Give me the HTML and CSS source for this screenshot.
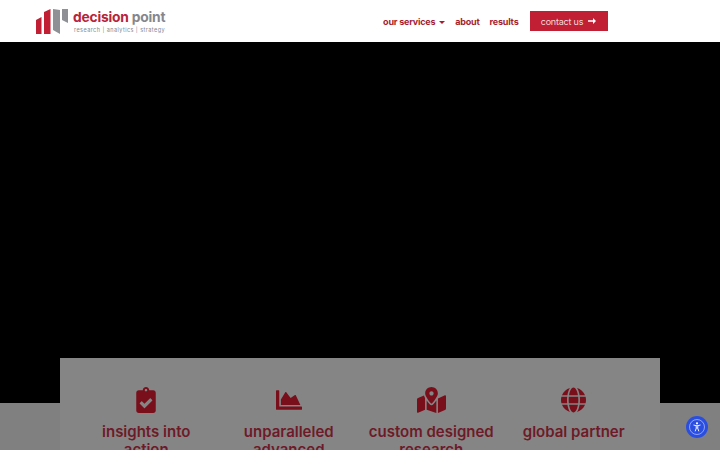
FILE: index.html
```html
<!DOCTYPE html>
<html lang="en">
<head>
  <meta charset="UTF-8" />
  <meta name="viewport" content="width=device-width, initial-scale=1.0"/>
  <title>Decision Point</title>
  <link rel="stylesheet" href="styles.css">
</head>
<body>
  <header class="site-header">
    <a class="logo">
      <svg class="logo-mark" width="33" height="26" viewBox="0 0 33 26">
        <polygon points="0,11 5.500,8 5.500,25 0,25" fill="#c11f33"/>
        <polygon points="8,3 14.500,0 14.500,25 8,25" fill="#c11f33"/>
        <polygon points="17,0 24,1 24,25 17,21" fill="#8e9096"/>
        <polygon points="26,0 32,0 32,14 26,11" fill="#8e9096"/>
      </svg>
      <div class="logo-text">
        <div class="logo-name"><span class="red">decision</span> <span class="grey">point</span></div>
        <div class="logo-sub">research | analytics | strategy</div>
      </div>
    </a>
    <nav class="main-nav">
      <a class="has-caret">our services <span class="caret"></span></a>
      <a>about</a>
      <a>results</a>
      <a class="contact-btn">contact us
        <svg width="8" height="6" viewBox="0 0 8 6"><path d="M0 2.200h5V0l3 3-3 3V3.800H0z" fill="#fff"/></svg>
      </a>
    </nav>
  </header>

  <section class="hero"></section>

  <section class="lower">
    <div class="panel">
      <div class="feature">
        <svg class="icon" width="20" height="26" viewBox="0 0 384 512"><path fill="#7a0f1c" d="M336 64h-80c0-35.300-28.700-64-64-64s-64 28.700-64 64H48C21.500 64 0 85.500 0 112v352c0 26.500 21.500 48 48 48h288c26.500 0 48-21.500 48-48V112c0-26.500-21.500-48-48-48zM192 40c13.300 0 24 10.700 24 24s-10.700 24-24 24-24-10.700-24-24 10.700-24 24-24zm121.200 231.800l-143 141.800c-4.700 4.700-12.300 4.600-17-.1l-82.600-83.300c-4.700-4.700-4.600-12.300.1-17L99.100 285c4.700-4.700 12.300-4.600 17 .1l46 46.400 106-105.200c4.700-4.700 12.300-4.600 17 .1l28.200 28.400c4.700 4.800 4.600 12.300-.1 17z"/></svg>
        <h3>insights into action</h3>
      </div>
      <div class="feature">
        <svg class="icon" width="26" height="26" viewBox="0 0 512 512"><path fill="#7a0f1c" d="M500 384c6.600 0 12 5.400 12 12v40c0 6.600-5.400 12-12 12H12c-6.600 0-12-5.400-12-12V76c0-6.600 5.400-12 12-12h40c6.600 0 12 5.400 12 12v308h436zM372.700 159.500L288 216l-85.300-113.700c-5.100-6.800-15.500-6.300-19.900 1L96 248v104h384l-89.900-187.800c-3.200-6.500-11.400-8.700-17.400-4.700z"/></svg>
        <h3>unparalleled advanced analytics</h3>
      </div>
      <div class="feature">
        <svg class="icon" width="29" height="26" viewBox="0 0 576 512"><path fill="#7a0f1c" d="M288 0c-69.590 0-126 56.410-126 126 0 56.260 82.350 158.800 113.900 196.020 6.390 7.540 17.820 7.540 24.200 0C331.650 284.800 414 182.260 414 126 414 56.410 357.590 0 288 0zm0 168c-23.200 0-42-18.800-42-42s18.800-42 42-42 42 18.800 42 42-18.800 42-42 42zM20.120 215.950A32.006 32.006 0 0 0 0 245.660v250.320c0 11.320 11.430 19.060 21.940 14.860L160 448V214.920c-8.840-15.980-16.070-31.540-21.250-46.420L20.120 215.950zM288 359.670c-14.070 0-27.380-6.180-36.510-16.960-19.660-23.200-40.570-49.620-59.490-76.720v182l192 64V266c-18.920 27.090-39.820 53.520-59.490 76.720-9.130 10.770-22.440 16.950-36.510 16.950zm266.060-198.510L416 224v288l139.880-55.950A31.996 31.996 0 0 0 576 426.340V176.020c0-11.320-11.430-19.060-21.940-14.860z"/></svg>
        <h3>custom designed research</h3>
      </div>
      <div class="feature">
        <svg class="icon" width="25" height="26" viewBox="0 0 496 512"><path fill="#7a0f1c" d="M336.500 160C322 70.700 287.800 8 248 8s-74 62.700-88.500 152h177zM152 256c0 22.200 1.200 43.500 3.300 64h185.300c2.100-20.500 3.300-41.800 3.300-64s-1.200-43.500-3.300-64H155.300c-2.100 20.500-3.300 41.800-3.300 64zm324.700-96c-28.600-67.900-86.500-120.400-158-141.600 24.400 33.800 41.200 84.700 50 141.600h108zM177.200 18.400C105.800 39.600 47.800 92.100 19.300 160h108c8.700-56.900 25.500-107.800 49.900-141.600zM487.400 192H372.700c2.100 21 3.300 42.500 3.300 64s-1.200 43-3.300 64h114.600c5.500-20.500 8.600-41.800 8.600-64s-3.100-43.500-8.500-64zM120 256c0-21.500 1.200-43 3.300-64H8.600C3.200 212.500 0 233.800 0 256s3.200 43.500 8.600 64h114.600c-2-21-3.200-42.500-3.200-64zm39.500 96c14.500 89.300 48.700 152 88.500 152s74-62.700 88.500-152h-177zm159.300 141.600c71.400-21.200 129.400-73.700 158-141.600h-108c-8.800 56.900-25.600 107.800-50 141.600zM19.300 352c28.600 67.900 86.500 120.400 158 141.600-24.400-33.800-41.200-84.700-50-141.600h-108z"/></svg>
        <h3>global partner</h3>
      </div>
    </div>
  </section>

  <button class="a11y-btn" aria-label="Accessibility">
    <svg width="22" height="22" viewBox="0 0 22 22">
      <circle cx="11" cy="11" r="7.500" fill="none" stroke="#a9b8ff" stroke-width=".8"/>
      <circle cx="11" cy="7.300" r="1.100" fill="#fff"/>
      <path d="M7.500 9l2.600.7h1.800l2.600-.7M10.200 9.700v2.600l-1 3M11.800 9.700v2.600l1 3M10.200 12h1.600" fill="none" stroke="#fff" stroke-width=".9"/>
    </svg>
  </button>
</body>
</html>
```

FILE: styles.css
```css
html, body {
  height: 100%;
  overflow: hidden;
}

body {
  margin: 0;
  font-family: "Inter", "Liberation Sans", sans-serif;
  background: #808080;
}

.site-header {
  height: 42px;
  box-sizing: border-box;
  background: #fff;
  display: flex;
  align-items: center;
  justify-content: space-between;
  padding: 0 112.500px 0 36px;
}

.logo {
  display: flex;
  align-items: center;
  gap: 4px;
}

.logo-mark {
  margin-top: 1px;
}

.logo-name {
  font-size: 13.800px;
  font-weight: 700;
  letter-spacing: -0.2px;
  line-height: 16px;
  white-space: nowrap;
}

.logo-name .red {
  color: #b8243a;
}

.logo-name .grey {
  color: #85878d;
}

.logo-sub {
  font-size: 5.500px;
  letter-spacing: 0.45px;
  color: #85878d;
  line-height: 8px;
  margin: 1px 0 0 1px;
  white-space: nowrap;
}

.main-nav {
  display: flex;
  align-items: center;
  gap: 10px;
  font-size: 9px;
  letter-spacing: -0.2px;
  font-weight: 700;
  color: #a51c30;
}

.main-nav a {
  white-space: nowrap;
}

.caret {
  display: inline-block;
  width: 0;
  height: 0;
  margin-left: 2px;
  vertical-align: 1px;
  border-left: 3px solid transparent;
  border-right: 3px solid transparent;
  border-top: 3px solid #a51c30;
}

.main-nav .contact-btn {
  background: #c11f33;
  color: #f3d9dc;
  font-weight: 400;
  width: 78px;
  height: 20px;
  margin-left: 1px;
  display: flex;
  align-items: center;
  justify-content: center;
  gap: 5px;
}

.hero {
  height: 360.500px;
  background: #000;
}

.lower {
  padding: 0 60px;
  height: 200px;
}

.panel {
  margin-top: -45px;
  background: #858585;
  display: grid;
  grid-template-columns: repeat(4, 1fr);
  padding: 29px 15px 20px;
}

.feature {
  display: flex;
  flex-direction: column;
  align-items: center;
  text-align: center;
  padding: 0 5px;
}

.icon {
  height: 26px;
}

.feature h3 {
  margin: 10px 0 0;
  font-size: 15px;
  font-weight: 600;
  line-height: 18px;
  color: #6e1a28;
}

.a11y-btn {
  position: fixed;
  right: 12px;
  bottom: 12px;
  width: 22px;
  height: 22px;
  padding: 0;
  border: none;
  border-radius: 50%;
  background: #2a4fe0;
  display: flex;
  align-items: center;
  justify-content: center;
}
```
